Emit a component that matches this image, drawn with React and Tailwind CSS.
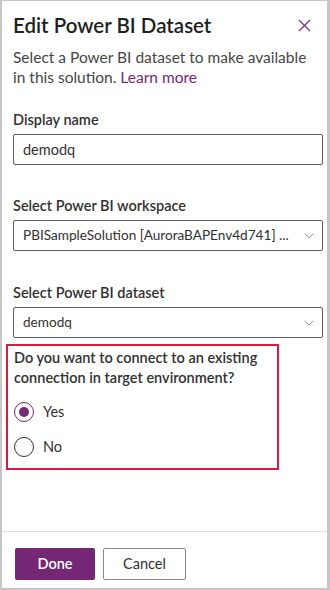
import { ChevronDown } from 'lucide-react';

function Select({ value }) {
  return (
    <div className="flex items-center justify-between h-[31px] border border-[#605e5c] rounded-[2px] pl-[9px] pr-[5px]">
      <span className="text-[13.6px] text-[#323130] whitespace-nowrap overflow-hidden">{value}</span>
      <ChevronDown size={16} strokeWidth={1} className="text-[#605e5c] shrink-0 ml-[6px]" />
    </div>
  );
}

function Radio({ checked, label }) {
  return (
    <div className="flex items-center gap-[9px]">
      <div
        className={`w-[20px] h-[20px] rounded-full border flex items-center justify-center ${
          checked ? 'border-[#742774]' : 'border-[#323130]'
        }`}
      >
        {checked && <div className="w-[10px] h-[10px] rounded-full bg-[#742774]" />}
      </div>
      <span className="text-[14.5px] text-[#323130]">{label}</span>
    </div>
  );
}

export default function App() {
  return (
    <div
      className="w-[330px] h-[590px] border-[#c6c6c6] border-t-[1px] border-l-[2px] border-r-[3px] border-b-[2px] bg-white flex flex-col"
      style={{ fontFamily: '"Segoe UI", Lato, "Noto Sans", sans-serif' }}
    >
      <div className="flex-1 pl-[11px] pr-[4px]">
        {/* Header */}
        <div className="flex items-start justify-between pt-[10px]">
          <h1 className="text-[20.5px] leading-[28px] font-semibold text-[#201f1e]">Edit Power BI Dataset</h1>
          <button className="mt-[8px] mr-[12px] text-[#742774]">
            <svg width="13" height="13" viewBox="0 0 13 13">
              <path d="M1 1 L12 12 M12 1 L1 12" stroke="currentColor" strokeWidth="1.1" />
            </svg>
          </button>
        </div>
        <p className="mt-[8px] w-[306px] text-[15.5px] leading-[20px] text-[#484644]">
          Select a Power BI dataset to make available in this solution.{' '}
          <span className="text-[#742774]">Learn more</span>
        </p>

        {/* Display name */}
        <div className="mt-[23px]">
          <div className="text-[14.5px] font-semibold text-[#323130] leading-[20px]">Display name</div>
          <div className="mt-[4px] flex items-center h-[31px] border border-[#605e5c] rounded-[2px] pl-[9px]">
            <span className="text-[14.5px] text-[#323130]">demodq</span>
          </div>
        </div>

        {/* Workspace */}
        <div className="mt-[31px]">
          <div className="text-[14.5px] font-semibold text-[#323130] leading-[20px]">Select Power BI workspace</div>
          <div className="mt-[4px]">
            <Select value="PBISampleSolution [AuroraBAPEnv4d741] ..." />
          </div>
        </div>

        {/* Dataset */}
        <div className="mt-[32px]">
          <div className="text-[14.5px] font-semibold text-[#323130] leading-[20px]">Select Power BI dataset</div>
          <div className="mt-[4px]">
            <Select value="demodq" />
          </div>
        </div>

        {/* Connection question */}
        <div className="-ml-[7px] mt-[6px] w-[273px] h-[126px] border-2 border-[#e3173e] pl-[6px] pt-[2px]">
          <p className="text-[14.5px] font-semibold text-[#323130] leading-[20px]">
            Do you want to connect to an existing connection in target environment?
          </p>
          <div className="mt-[13px] flex flex-col gap-[13px]">
            <Radio checked label="Yes" />
            <Radio label="No" />
          </div>
        </div>
      </div>

      {/* Footer */}
      <div className="border-t border-[#e1dfdd] h-[57px] flex items-start gap-[8px] pl-[13px] pt-[16px]">
        <button className="w-[80px] h-[32px] bg-[#742774] text-white text-[14.5px] font-semibold rounded-[2px]">Done</button>
        <button className="w-[83px] h-[32px] border border-[#8a8886] text-[#323130] text-[14.5px] rounded-[2px]">Cancel</button>
      </div>
    </div>
  );
}
